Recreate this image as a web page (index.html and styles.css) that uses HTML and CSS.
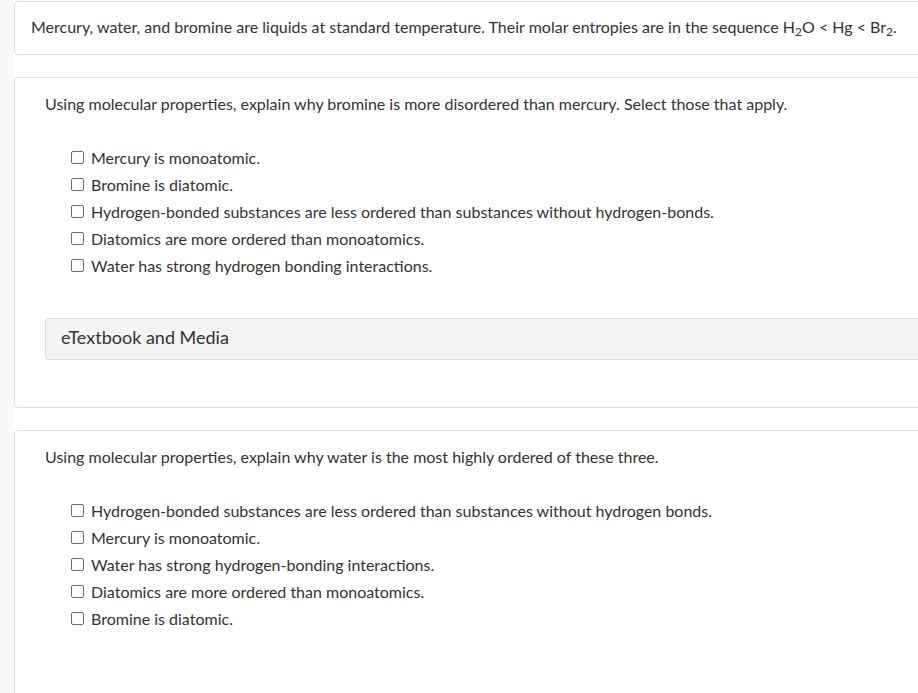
FILE: index.html
```html
<!DOCTYPE html>
<html lang="en">
<head>
<meta charset="utf-8">
<title>Question</title>
<link rel="stylesheet" href="styles.css">
</head>
<body>
<div class="main">
  <div class="card intro">
    <p class="intro-text">Mercury, water, and bromine are liquids at standard temperature. Their molar entropies are in the sequence H<sub>2</sub>O &lt; Hg &lt; Br<sub>2</sub>.</p>
  </div>

  <div class="card part">
    <p class="question">Using molecular properties, explain why bromine is more disordered than mercury. Select those that apply.</p>
    <ul class="choices">
      <li class="choice"><span class="box"></span>Mercury is monoatomic.</li>
      <li class="choice"><span class="box"></span>Bromine is diatomic.</li>
      <li class="choice"><span class="box"></span>Hydrogen-bonded substances are less ordered than substances without hydrogen-bonds.</li>
      <li class="choice"><span class="box"></span>Diatomics are more ordered than monoatomics.</li>
      <li class="choice"><span class="box"></span>Water has strong hydrogen bonding interactions.</li>
    </ul>
    <div class="media">eTextbook and Media</div>
  </div>

  <div class="card part last">
    <p class="question">Using molecular properties, explain why water is the most highly ordered of these three.</p>
    <ul class="choices">
      <li class="choice"><span class="box"></span>Hydrogen-bonded substances are less ordered than substances without hydrogen bonds.</li>
      <li class="choice"><span class="box"></span>Mercury is monoatomic.</li>
      <li class="choice"><span class="box"></span>Water has strong hydrogen-bonding interactions.</li>
      <li class="choice"><span class="box"></span>Diatomics are more ordered than monoatomics.</li>
      <li class="choice"><span class="box"></span>Bromine is diatomic.</li>
    </ul>
  </div>
</div>
</body>
</html>
```
FILE: styles.css
```css
html, body {
  margin: 0;
  padding: 0;
  overflow: hidden;
  height: 100%;
}
body {
  background: #f9f9f9;
  font-family: Lato, "Liberation Sans", sans-serif;
  color: #333333;
  font-size: 16px;
}
.main {
  margin-left: 14px;
  height: 100%;
  background: #ffffff;
  padding-top: 1px;
  box-sizing: border-box;
  overflow: hidden;
}
.card {
  border: 1px solid #dcdcdc;
  border-radius: 4px;
  background: #ffffff;
  margin: 0 -60px 22px 0;
}
.intro {
  padding: 15px 16px 17px;
}
.intro-text {
  margin: 0;
  line-height: 20px;
}
sub {
  font-size: 12px;
  line-height: 0;
  vertical-align: -3px;
}
.part {
  padding: 16px 30px 47px;
}
.last {
  height: 280px;
  margin-bottom: 0;
}
.question {
  margin: 0;
  line-height: 20px;
}
.choices {
  list-style: none;
  margin: 30px 0 0;
  padding: 0 0 0 26px;
}
.choice {
  display: flex;
  align-items: center;
  height: 27px;
}
.box {
  width: 11px;
  height: 11px;
  border: 1px solid #6b6b6b;
  border-radius: 2px;
  margin-right: 7px;
  flex: none;
}
.media {
  margin-top: 39px;
  height: 36px;
  line-height: 36px;
  padding-bottom: 4px;
  background: #f4f4f4;
  border: 1px solid #dcdcdc;
  border-radius: 3px;
  padding-left: 15px;
  font-size: 18px;
}
```
